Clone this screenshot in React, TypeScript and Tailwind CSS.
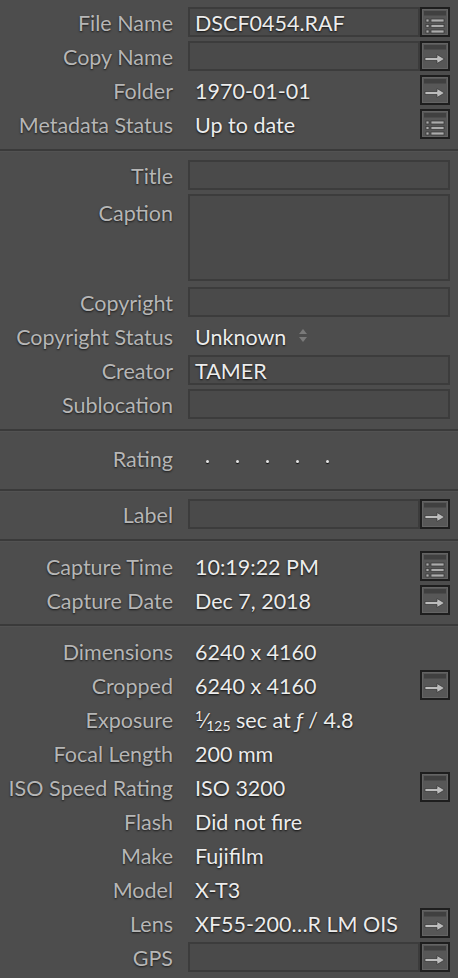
import React from 'react';

type Btn = 'list' | 'arrow' | undefined;

function SideButton({ kind }: { kind: 'list' | 'arrow' }) {
  return (
    <div className="w-[30px] h-[30px] shrink-0 border-2 border-[#1e1e1e] bg-[#575757]">
      <svg width="26" height="26" viewBox="0 0 26 26">
        <rect x="0.5" y="0.5" width="25" height="25" fill="none" stroke="#646464" />
        <rect x="2" y="2" width="22" height="4.5" fill="#404040" />
        {kind === 'list' ? (
          [0, 1, 2].map((i) => (
            <g key={i}>
              <rect x="4" y={10 + i * 5.5} width="3" height="3" fill="#ababab" stroke="#333" strokeWidth="0.7" />
              <rect x="9" y={10 + i * 5.5} width="13" height="3" fill="#ababab" stroke="#333" strokeWidth="0.7" />
            </g>
          ))
        ) : (
          <polygon
            points="3,14.5 15,14.5 15,11.5 22.5,16 15,20.5 15,17.5 3,17.5"
            fill="#bcbcbc"
            stroke="#333"
            strokeWidth="0.7"
          />
        )}
      </svg>
    </div>
  );
}

const labelCls =
  "w-[173px] shrink-0 pt-[3px] text-right text-[21.5px] leading-none text-[#b6b6b6] [text-shadow:0_1px_2px_rgba(0,0,0,0.7)] whitespace-nowrap";
const valueCls =
  "pt-[3px] text-[21.5px] leading-none text-[#ececec] [text-shadow:0_1px_2px_rgba(0,0,0,0.85)] whitespace-nowrap";

function Row({
  label,
  value,
  box,
  button,
}: {
  label: string;
  value?: React.ReactNode;
  box?: boolean;
  button?: Btn;
}) {
  return (
    <div className="flex h-[34px] items-center">
      <div className={labelCls}>{label}</div>
      <div className="ml-[15px] w-[262px] h-[30px] flex items-center">
        {box ? (
          <div className="flex-1 h-full border-2 border-[#3c3c3c] bg-[#4a4a4a] px-[5px] flex items-center">
            <span className={valueCls}>{value}</span>
          </div>
        ) : (
          <div className="flex-1 pl-[7px] flex items-center">
            <span className={valueCls}>{value}</span>
          </div>
        )}
        {button && <SideButton kind={button} />}
      </div>
    </div>
  );
}

function Divider() {
  return <div className="h-[2px] bg-[#3a3a3a] border-b border-[#525252] box-content" />;
}

export default function App() {
  return (
    <div className="w-[458px] h-[978px] overflow-hidden bg-[#4d4d4d] font-['Lato','Open_Sans',sans-serif]">
      {/* File */}
      <div className="pt-[5px] pb-[8px]">
        <Row label="File Name" value="DSCF0454.RAF" box button="list" />
        <Row label="Copy Name" box button="arrow" />
        <Row label="Folder" value="1970-01-01" button="arrow" />
        <Row label="Metadata Status" value="Up to date" button="list" />
      </div>
      <Divider />

      {/* IPTC */}
      <div className="pt-[6px] pb-[8px]">
        <Row label="Title" box />
        <div className="flex h-[93px] items-start">
          <div className={`${labelCls} !pt-[11px]`}>Caption</div>
          <div className="ml-[15px] w-[262px] h-[87px] mt-[2px] border-2 border-[#3c3c3c] bg-[#4a4a4a]" />
        </div>
        <Row label="Copyright" box />
        <div className="flex h-[34px] items-center">
          <div className={labelCls}>Copyright Status</div>
          <div className="ml-[15px] pl-[7px] flex items-center gap-[12px]">
            <span className={valueCls}>Unknown</span>
            <svg width="10" height="16" viewBox="0 0 10 16">
              <polygon points="5,1 9,6 1,6" fill="#7a7a7a" />
              <polygon points="1,9 9,9 5,14" fill="#7a7a7a" />
            </svg>
          </div>
        </div>
        <Row label="Creator" value="TAMER" box />
        <Row label="Sublocation" box />
      </div>
      <Divider />

      {/* Rating */}
      <div className="pt-[9px] pb-[14px]">
        <div className="flex h-[34px] items-center">
          <div className={labelCls}>Rating</div>
          <div className="ml-[33px] flex items-center gap-[27px] pt-[7px]">
            {[0, 1, 2, 3, 4].map((i) => (
              <span key={i} className="block w-[3px] h-[3px] rounded-full bg-[#e6e6e6] shadow-[0_1px_1px_rgba(0,0,0,0.8)]" />
            ))}
          </div>
        </div>
      </div>
      <Divider />

      {/* Label */}
      <div className="pt-[5px] pb-[8px]">
        <Row label="Label" box button="arrow" />
      </div>
      <Divider />

      {/* Capture */}
      <div className="pt-[7px] pb-[7px]">
        <Row label="Capture Time" value="10:19:22 PM" button="list" />
        <Row label="Capture Date" value="Dec 7, 2018" button="arrow" />
      </div>
      <Divider />

      {/* EXIF */}
      <div className="pt-[7px]">
        <Row label="Dimensions" value="6240 x 4160" />
        <Row label="Cropped" value="6240 x 4160" button="arrow" />
        <Row
          label="Exposure"
          value={
            <>
              <sup className="text-[14px] top-[-0.45em]">1</sup>
              <span>⁄</span>
              <sub className="text-[14px] bottom-[-0.2em]">125</sub> sec at <i>ƒ</i> / 4.8
            </>
          }
        />
        <Row label="Focal Length" value="200 mm" />
        <Row label="ISO Speed Rating" value="ISO 3200" button="arrow" />
        <Row label="Flash" value="Did not fire" />
        <Row label="Make" value="Fujifilm" />
        <Row label="Model" value="X-T3" />
        <Row label="Lens" value="XF55-200…R LM OIS" button="arrow" />
        <Row label="GPS" box button="arrow" />
      </div>
    </div>
  );
}
